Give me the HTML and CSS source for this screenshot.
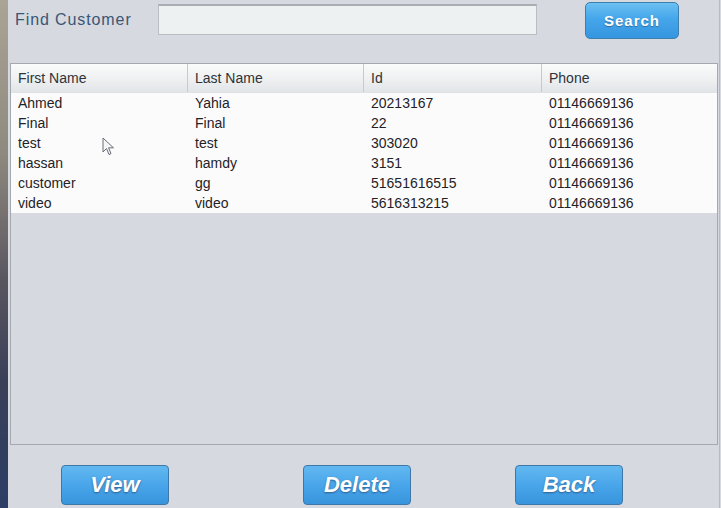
FILE: index.html
```html
<!DOCTYPE html>
<html>
<head>
<meta charset="utf-8">
<link rel="stylesheet" href="styles.css">
</head>
<body>
<div class="desk"></div>
<div class="window">
  <div class="topbar">
    <span class="find-label">Find Customer</span>
    <div class="field"></div>
    <button class="search-btn">Search</button>
  </div>
  <div class="table">
    <div class="thead">
      <div class="th">First Name</div>
      <div class="th">Last Name</div>
      <div class="th">Id</div>
      <div class="th last">Phone</div>
    </div>
    <div class="tbody">
      <div class="tr"><span>Ahmed</span><span>Yahia</span><span>20213167</span><span>01146669136</span></div>
      <div class="tr"><span>Final</span><span>Final</span><span>22</span><span>01146669136</span></div>
      <div class="tr"><span>test</span><span>test</span><span>303020</span><span>01146669136</span></div>
      <div class="tr"><span>hassan</span><span>hamdy</span><span>3151</span><span>01146669136</span></div>
      <div class="tr"><span>customer</span><span>gg</span><span>51651616515</span><span>01146669136</span></div>
      <div class="tr"><span>video</span><span>video</span><span>5616313215</span><span>01146669136</span></div>
    </div>
    <svg class="cursor" width="14" height="20" viewBox="0 0 14 20">
      <path d="M1 1 L1 15 L4.5 11.5 L7 17.5 L9 16.6 L6.6 10.8 L11.5 10.8 Z" fill="#f4f5f7" stroke="#6a6e74" stroke-width="1"/>
    </svg>
  </div>
  <div class="bottombar">
    <button class="big-btn view">View</button>
    <button class="big-btn delete">Delete</button>
    <button class="big-btn back">Back</button>
  </div>
</div>
</body>
</html>
```
FILE: styles.css
```css
html, body {
  margin: 0;
  padding: 0;
  width: 721px;
  height: 508px;
  overflow: hidden;
}
body {
  display: flex;
  background: #d6d9e0;
  font-family: "Liberation Sans", Arial, sans-serif;
}
.desk {
  width: 8px;
  flex: none;
  background: linear-gradient(180deg, #a9a495 0%, #8f8a7f 30%, #5a5660 55%, #3a3f58 75%, #2c3e66 100%);
}
.window {
  width: 711px;
  flex: none;
  background: #d6d9e0;
  border-right: 1px solid #c9b4b0;
  display: flex;
  flex-direction: column;
}
.topbar {
  height: 63px;
  display: flex;
  align-items: flex-start;
  padding-left: 7px;
}
.find-label {
  margin-top: 11px;
  font-size: 16px;
  letter-spacing: 0.9px;
  color: #3a5675;
  width: 143px;
  flex: none;
}
.field {
  margin-top: 4px;
  width: 377px;
  height: 28px;
  background: #eef1f2;
  border: 1px solid #b9bec4;
  border-top: 2px solid #a9aeb4;
  flex: none;
}
.search-btn {
  margin-top: 2px;
  margin-left: 48px;
  width: 94px;
  height: 37px;
  border: 1px solid #3f7fae;
  border-radius: 5px;
  background: linear-gradient(180deg, #6cc0f2 0%, #45a6eb 45%, #3596e0 100%);
  color: #fff;
  font-family: "Liberation Sans", Arial, sans-serif;
  font-weight: bold;
  font-size: 15px;
  letter-spacing: 1px;
  text-shadow: 0 1px 1px rgba(20, 60, 100, 0.5);
  padding: 0;
  flex: none;
}
.table {
  position: relative;
  margin-left: 2px;
  width: 706px;
  height: 380px;
  border: 1px solid #a4a9b0;
  background: #d6d9e0;
}
.thead {
  display: grid;
  grid-template-columns: 177px 176px 178px 1fr;
  height: 28px;
  background: linear-gradient(180deg, #fafbfb 0%, #eef0f1 55%, #e2e5e8 100%);
  border-bottom: 1px solid #dfe2e5;
}
.th {
  font-size: 14px;
  color: #2e3338;
  padding-left: 7px;
  line-height: 28px;
  border-right: 1px solid #c6cace;
}
.th.last {
  border-right: none;
}
.tbody {
  background: #fbfbfc;
}
.tr {
  display: grid;
  grid-template-columns: 177px 176px 178px 1fr;
  height: 20px;
  line-height: 20px;
  font-size: 14px;
  color: #1f2226;
}
.tr span {
  padding-left: 7px;
}
.cursor {
  position: absolute;
  left: 91px;
  top: 73px;
}
.bottombar {
  display: flex;
  padding-top: 20px;
}
.big-btn {
  flex: none;
  width: 108px;
  height: 40px;
  border: 1px solid #3d78a8;
  border-radius: 4px;
  background: linear-gradient(180deg, #62b8f0 0%, #4aa6ea 50%, #3894dc 100%);
  color: #fff;
  font-family: "Liberation Sans", Arial, sans-serif;
  font-weight: bold;
  font-style: italic;
  font-size: 22px;
  text-shadow: 0 1px 2px rgba(20, 50, 90, 0.6);
  padding: 0;
}
.big-btn.view {
  margin-left: 53px;
}
.big-btn.delete {
  margin-left: 134px;
}
.big-btn.back {
  margin-left: 104px;
}
```
